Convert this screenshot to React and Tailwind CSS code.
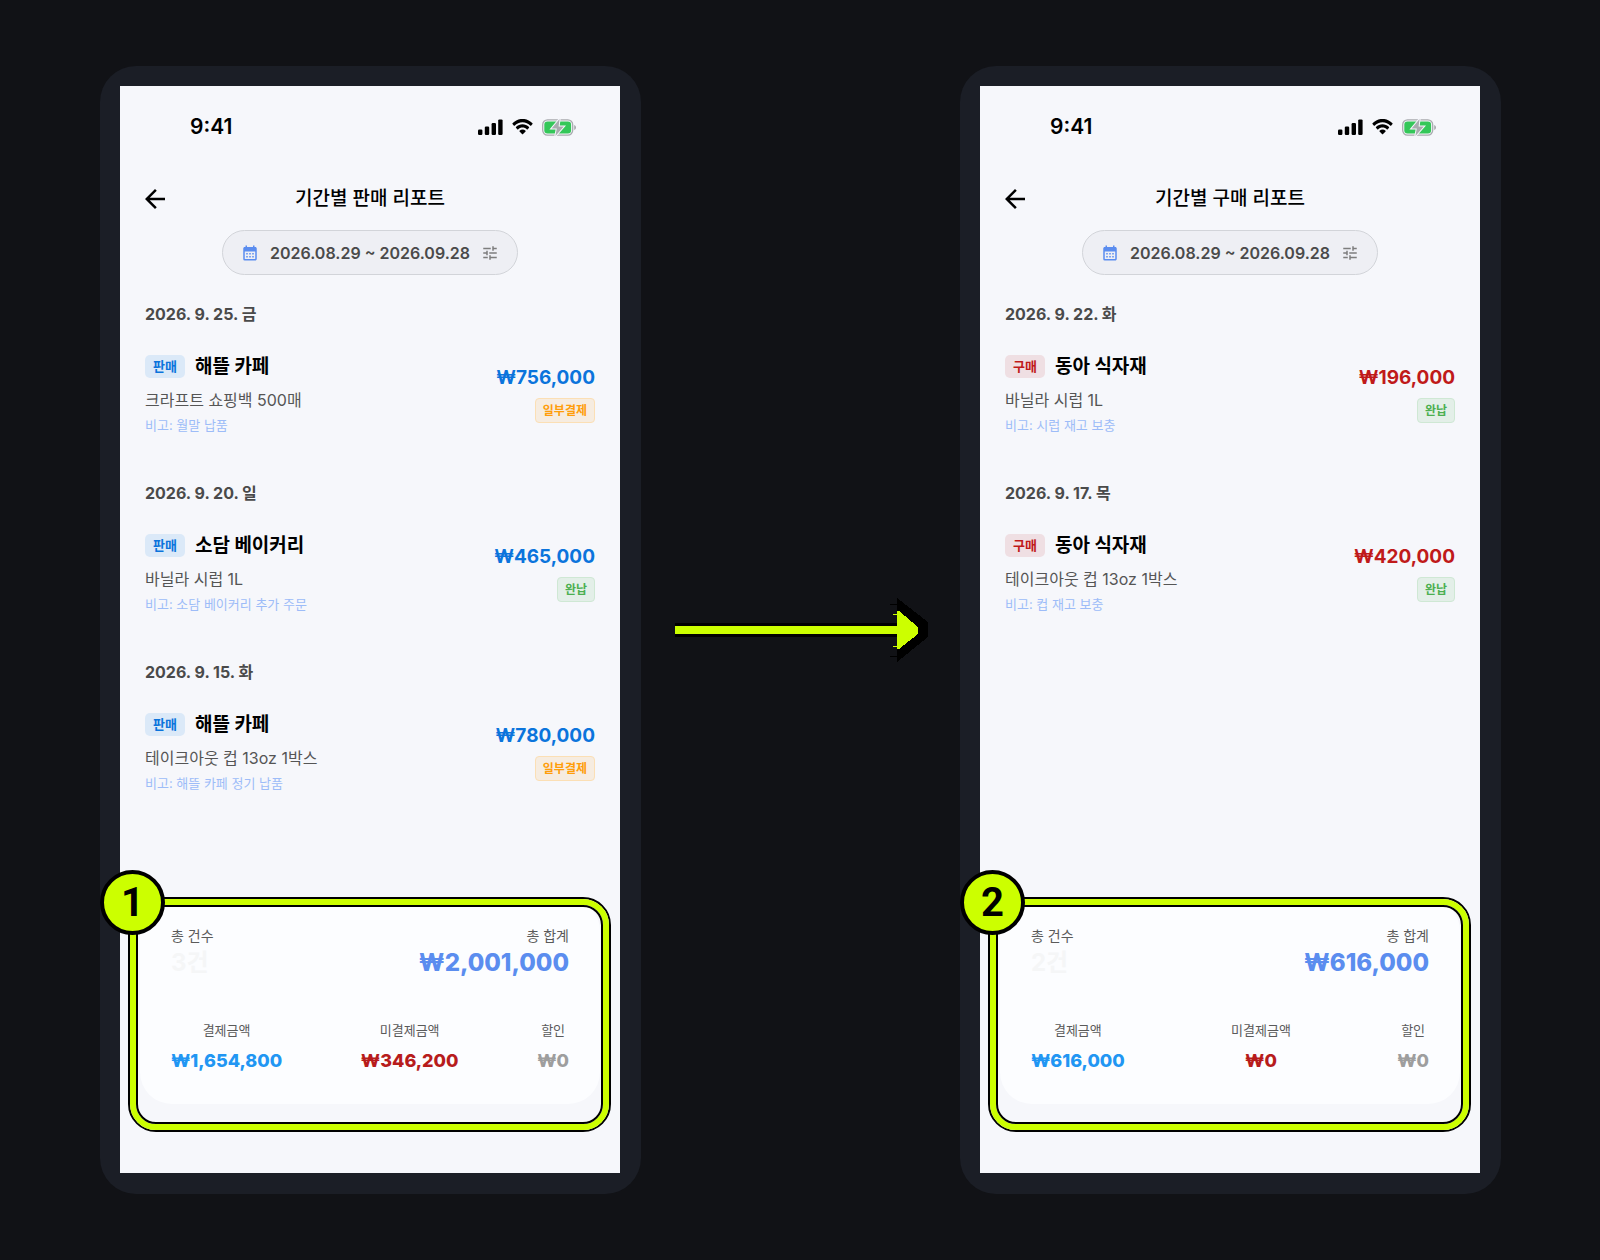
import React from "react";
import { MdCalendarMonth, MdTune, MdArrowBack } from "react-icons/md";

const sales = {
  title: "기간별 판매 리포트",
  marker: "1",
  kind: "판매",
  kindClass: "bg-[#dbe9f8] text-[#0b74dc]",
  amountClass: "text-[#0b74dc]",
  entries: [
    { date: "2026. 9. 25. 금", name: "해뜰 카페", item: "크라프트 쇼핑백 500매", note: "비고: 월말 납품", amount: "₩756,000", paid: false },
    { date: "2026. 9. 20. 일", name: "소담 베이커리", item: "바닐라 시럽 1L", note: "비고: 소담 베이커리 추가 주문", amount: "₩465,000", paid: true },
    { date: "2026. 9. 15. 화", name: "해뜰 카페", item: "테이크아웃 컵 13oz 1박스", note: "비고: 해뜰 카페 정기 납품", amount: "₩780,000", paid: false },
  ],
  count: "3건",
  total: "₩2,001,000",
  settled: "₩1,654,800",
  unsettled: "₩346,200",
  discount: "₩0",
};

const purchases = {
  title: "기간별 구매 리포트",
  marker: "2",
  kind: "구매",
  kindClass: "bg-[#efdfe3] text-[#c01a1a]",
  amountClass: "text-[#c01a1a]",
  entries: [
    { date: "2026. 9. 22. 화", name: "동아 식자재", item: "바닐라 시럽 1L", note: "비고: 시럽 재고 보충", amount: "₩196,000", paid: true },
    { date: "2026. 9. 17. 목", name: "동아 식자재", item: "테이크아웃 컵 13oz 1박스", note: "비고: 컵 재고 보충", amount: "₩420,000", paid: true },
  ],
  count: "2건",
  total: "₩616,000",
  settled: "₩616,000",
  unsettled: "₩0",
  discount: "₩0",
};

function StatusBar() {
  return (
    <div className="flex h-[82px] items-center justify-between pr-[43px] pl-[70px]">
      <span className="text-[21px] leading-6 font-semibold text-black">9:41</span>
      <div className="flex items-center gap-[9px]">
        <svg viewBox="0 0 25 16" className="h-4 w-[25px]" aria-hidden="true">
          <rect x="0" y="10.5" width="4.4" height="5.5" rx="1.2" />
          <rect x="6.8" y="7.5" width="4.4" height="8.5" rx="1.2" />
          <rect x="13.6" y="4" width="4.4" height="12" rx="1.2" />
          <rect x="20.2" y="0.4" width="4.4" height="15.6" rx="1.2" />
        </svg>
        <svg viewBox="0 0 17 12" className="h-4 w-[21px]" preserveAspectRatio="none" aria-hidden="true">
          <path d="M8.5 2.4c2.4 0 4.7.9 6.4 2.6.1.1.3.1.5 0l1.2-1.3c.1-.1.1-.4 0-.5-4.5-4.4-11.700-4.400-16.200 0-.1.1-.1.4 0 .5l1.200 1.300c.2.1.4.1.5 0C3.800 3.300 6.100 2.400 8.500 2.400z" />
          <path d="M8.500 6.400c1.300 0 2.600.5 3.600 1.400.1.1.3.1.5 0l1.200-1.300c.1-.1.1-.3 0-.5-3-2.800-7.600-2.800-10.600 0-.1.2-.1.4 0 .5l1.200 1.300c.2.1.4.1.5 0 1-.9 2.300-1.400 3.600-1.400z" />
          <path d="M11 9.300c.1-.1.100-.4 0-.5-1.400-1.200-3.500-1.200-4.900 0-.2.1-.2.400 0 .5l2.200 2.200c.1.100.3.100.4 0L11 9.300z" />
        </svg>
        <svg viewBox="0 0 35 17" className="h-[17px] w-[35px]" aria-hidden="true">
          <rect x="0.700" y="0.900" width="30" height="15.200" rx="4.800" fill="none" stroke="#a9abaf" strokeWidth="1.300" />
          <path d="M32.200 6v5c1.200-.4 1.800-1.400 1.800-2.500S33.400 6.400 32.200 6z" fill="#a9abaf" />
          <rect x="2.300" y="2.500" width="26.800" height="12" rx="3.200" fill="#34c759" />
          <path d="M17.600 0 9.600 9.400h5.200L13.400 17l8.400-9.600h-5.200z" fill="#a9abaf" stroke="#f6f7fc" strokeWidth="2" paintOrder="stroke" />
        </svg>
      </div>
    </div>
  );
}

function Entry({ entry, report }) {
  return (
    <li className="flex h-[179px] flex-col">
      <h2 className="text-[16px] leading-5 font-bold text-[#4a4a4a]">{entry.date}</h2>
      <div className="mt-7 flex items-center justify-between">
        <div>
          <div className="flex items-center gap-[10px]">
            <span className={`rounded-[5px] px-2 text-[13px] leading-[23px] font-bold ${report.kindClass}`}>{report.kind}</span>
            <span className="text-[19px] leading-[29px] font-bold text-black">{entry.name}</span>
          </div>
          <p className="mt-[7px] text-[16px] leading-6 text-[#555555]">{entry.item}</p>
          <p className="mt-[3px] text-[13px] leading-5 text-[#9dbcf8]">{entry.note}</p>
        </div>
        <div className="flex flex-col items-end gap-[6px]">
          <span className={`text-[19px] leading-7 font-bold ${report.amountClass}`}>{entry.amount}</span>
          {entry.paid ? (
            <span className="rounded-[4px] border border-[#cfe8d4] bg-[#e3efe8] px-[7px] text-[12px] leading-[23px] font-bold text-[#4caf50]">완납</span>
          ) : (
            <span className="rounded-[4px] border border-[#fbdfb5] bg-[#f6ece0] px-[7px] text-[12px] leading-[23px] font-bold text-[#ff9d0a]">일부결제</span>
          )}
        </div>
      </div>
    </li>
  );
}

function Figure({ label, value, tone }) {
  return (
    <div className="flex flex-col items-center gap-[9px]">
      <dt className="text-[13px] leading-5 text-[#5a5a5a]">{label}</dt>
      <dd className={`text-[18px] leading-6 font-extrabold ${tone}`}>{value}</dd>
    </div>
  );
}

function Summary({ report }) {
  return (
    <section className="relative mx-5 mb-[69px]">
      <div className="rounded-[32px] bg-[#fcfdff] px-[31px] pt-[27px] pb-[31px]">
        <dl className="flex justify-between">
          <div>
            <dt className="text-[14px] leading-5 text-[#5a5a5a]">총 건수</dt>
            <dd className="text-[24px] leading-[34px] font-bold text-[#f5f6f7]">{report.count}</dd>
          </div>
          <div className="text-right">
            <dt className="text-[14px] leading-5 text-[#5a5a5a]">총 합계</dt>
            <dd className="text-[24px] leading-[34px] font-extrabold text-[#5b8def]">{report.total}</dd>
          </div>
        </dl>
        <dl className="mt-10 flex justify-between">
          <Figure label="결제금액" value={report.settled} tone="text-[#2196f3]" />
          <Figure label="미결제금액" value={report.unsettled} tone="text-[#b71c1c]" />
          <Figure label="할인" value={report.discount} tone="text-[#9e9e9e]" />
        </dl>
      </div>
      <div className="absolute -top-[2px] -right-[11px] -bottom-7 -left-3 rounded-[28px] border-2 border-black">
        <div className="h-full rounded-[26px] border-[6px] border-[#ccff00]">
          <div className="h-full rounded-[20px] border-2 border-black" />
        </div>
      </div>
      <span className="absolute -top-[29px] -left-10 flex size-[65px] items-center justify-center rounded-full border-4 border-black bg-[#ccff00] font-['Roboto',sans-serif] text-[40px] leading-none font-bold text-black">
        {report.marker}
      </span>
    </section>
  );
}

function Phone({ report }) {
  return (
    <article className="flex min-h-[1128px] w-[541px] flex-col rounded-[36px] bg-[#1b1e26] pt-5 pr-[21px] pb-[21px] pl-5">
      <div className="flex grow flex-col bg-[#f6f7fb]">
        <StatusBar />
        <header className="flex h-[62px] items-center px-5">
          <button type="button" aria-label="뒤로" className="w-[30px]">
            <MdArrowBack className="size-[30px] text-black" />
          </button>
          <h1 className="flex-1 pr-[30px] text-center text-[19px] leading-7 font-medium text-black">{report.title}</h1>
        </header>
        <button type="button" className="flex h-[45px] items-center gap-[11px] self-center rounded-full border border-[#d2d4d9] bg-[#eeeff4] px-[18px] text-[16px] leading-5 font-semibold text-[#4a4a4a]">
          <MdCalendarMonth className="size-[18px] text-[#5b8def]" />
          2026.08.29 ~ 2026.09.28
          <MdTune className="size-[18px] text-[#7d7d7d]" />
        </button>
        <ul className="grow px-[25px] pt-[29px]">
          {report.entries.map((entry) => (
            <Entry key={entry.date} entry={entry} report={report} />
          ))}
        </ul>
        <Summary report={report} />
      </div>
    </article>
  );
}

function Arrow() {
  return (
    <svg viewBox="-2 0 256 66" className="h-[66px] w-[256px]" shapeRendering="crispEdges" aria-hidden="true">
      <path d="M0 26h222V1l31 24v15l-31 25V40H0z" fill="#000" />
      <path d="M215 7h7v1h-7zM215 59h7v1h-7z" fill="#000" />
      <path d="M0 29h222V14h2l19 16v7l-19 15h-2V37H0z" fill="#ccff00" />
      <path d="M218 17h4v1h-4zM218 49h4v1h-4z" fill="#ccff00" />
    </svg>
  );
}

export default function App() {
  return (
    <main className="flex min-h-screen items-center justify-between bg-[#111216] pr-[99px] pl-[100px] font-['Inter','Noto_Sans_CJK_KR',sans-serif]">
      <Phone report={sales} />
      <Arrow />
      <Phone report={purchases} />
    </main>
  );
}
